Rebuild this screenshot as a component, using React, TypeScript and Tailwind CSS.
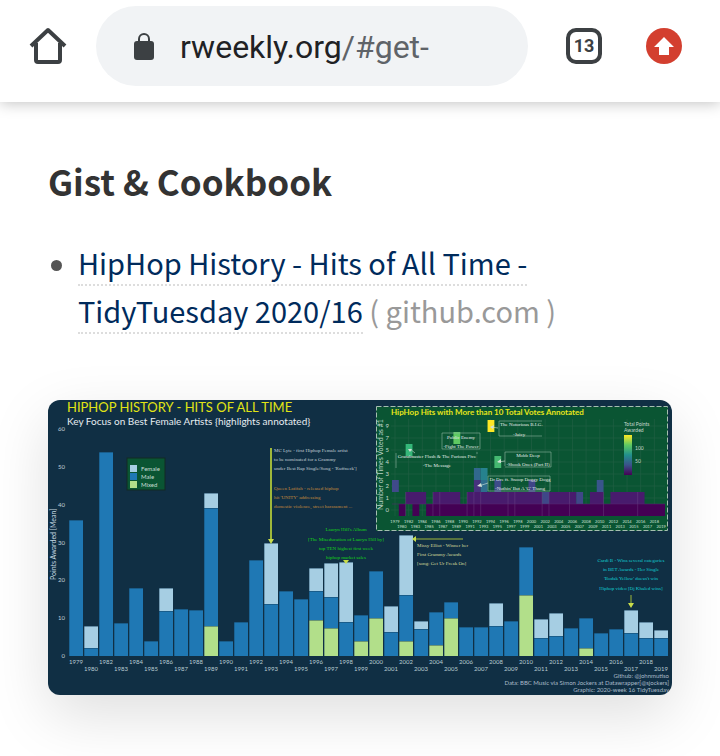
type Segment = "female" | "male" | "mixed";

const fills: Record<Segment, string> = {
  female: "#a6cee3",
  male: "#1f78b4",
  mixed: "#b2df8a",
};

const BASE = 656;

// Year, then the top edge of every stacked segment from the highest down.
const bars: { year: number; stack: [Segment, number][] }[] = [
  { year: 1979, stack: [["male", 520]] },
  { year: 1980, stack: [["female", 626], ["male", 648]] },
  { year: 1982, stack: [["male", 452]] },
  { year: 1983, stack: [["male", 623]] },
  { year: 1984, stack: [["male", 588]] },
  { year: 1985, stack: [["male", 641]] },
  { year: 1986, stack: [["female", 588], ["male", 611]] },
  { year: 1987, stack: [["male", 609]] },
  { year: 1988, stack: [["male", 610]] },
  { year: 1989, stack: [["female", 493], ["male", 508], ["mixed", 626]] },
  { year: 1990, stack: [["male", 641]] },
  { year: 1991, stack: [["male", 622]] },
  { year: 1992, stack: [["male", 560]] },
  { year: 1993, stack: [["female", 543], ["male", 604]] },
  { year: 1994, stack: [["male", 591]] },
  { year: 1995, stack: [["male", 599]] },
  { year: 1996, stack: [["female", 568], ["male", 591], ["mixed", 620]] },
  { year: 1997, stack: [["female", 563], ["male", 597], ["mixed", 628]] },
  { year: 1998, stack: [["female", 562], ["male", 622]] },
  { year: 1999, stack: [["male", 615], ["mixed", 641]] },
  { year: 2000, stack: [["male", 571], ["mixed", 618]] },
  { year: 2001, stack: [["female", 606], ["male", 632]] },
  { year: 2002, stack: [["female", 535], ["male", 595], ["mixed", 641]] },
  { year: 2003, stack: [["female", 621], ["male", 629]] },
  { year: 2004, stack: [["male", 612], ["mixed", 645]] },
  { year: 2005, stack: [["male", 602], ["mixed", 618]] },
  { year: 2006, stack: [["male", 627]] },
  { year: 2007, stack: [["male", 627]] },
  { year: 2008, stack: [["female", 603], ["male", 626]] },
  { year: 2009, stack: [["male", 621]] },
  { year: 2010, stack: [["male", 547], ["mixed", 595]] },
  { year: 2011, stack: [["female", 619], ["male", 638]] },
  { year: 2012, stack: [["female", 613], ["male", 636]] },
  { year: 2013, stack: [["male", 628]] },
  { year: 2014, stack: [["male", 618], ["mixed", 648]] },
  { year: 2015, stack: [["male", 633]] },
  { year: 2016, stack: [["male", 629]] },
  { year: 2017, stack: [["female", 610], ["male", 633]] },
  { year: 2018, stack: [["female", 622], ["male", 638]] },
  { year: 2019, stack: [["female", 630], ["male", 638]] },
];

// Heat map cells: first column, last column, row, colour.
const cells: [number, number, number, string][] = [
  [1, 1, 0, "#440154"],
  [3, 3, 0, "#440154"],
  [5, 39, 0, "#440154"],
  [2, 4, 1, "#481b6d"],
  [6, 9, 1, "#481b6d"],
  [11, 21, 1, "#481b6d"],
  [22, 22, 1, "#3f4788"],
  [23, 26, 1, "#481b6d"],
  [27, 27, 1, "#3f4788"],
  [29, 30, 1, "#481b6d"],
  [32, 36, 1, "#481b6d"],
  [0, 0, 2, "#3f4a8a"],
  [12, 12, 2, "#46327e"],
  [13, 13, 2, "#2e6e8e"],
  [15, 15, 2, "#3e4c8a"],
  [20, 20, 2, "#3f4587"],
  [30, 30, 2, "#39558c"],
  [12, 12, 3, "#31688e"],
  [13, 13, 3, "#26828e"],
  [15, 15, 4, "#45b871"],
  [2, 2, 5, "#35b779"],
  [9, 9, 6, "#5ec962"],
  [14, 14, 7, "#fde725"],
];

const COL = 273 / 40;
const colX = (i: number) => 392 + i * COL;

type Note = {
  x: number;
  y: number;
  text: string;
  fill: string;
  anchor?: "start" | "middle" | "end";
};

const notes: Note[] = [
  { x: 274, y: 452, text: "MC Lyte - first Hiphop Female artist", fill: "#c4d0d8" },
  { x: 274, y: 461, text: "to be nominated for a Grammy", fill: "#c4d0d8" },
  { x: 274, y: 470, text: "under Best Rap Single/Song - 'Ruffneck']", fill: "#c4d0d8" },
  { x: 274, y: 490, text: "Queen Latifah - released hiphop", fill: "#c58a3c" },
  { x: 274, y: 499, text: "hit 'UNITY' addressing", fill: "#c58a3c" },
  { x: 274, y: 508, text: "domestic violence, street harassment ...", fill: "#c58a3c" },
  { x: 346, y: 531, text: "Lauryn Hill's Album", fill: "#16d616", anchor: "middle" },
  { x: 346, y: 541, text: "[The Miseducation of Lauryn Hill by]", fill: "#16d616", anchor: "middle" },
  { x: 346, y: 550, text: "top TEN highest first week", fill: "#16d616", anchor: "middle" },
  { x: 346, y: 559, text: "hiphop market sales", fill: "#16d616", anchor: "middle" },
  { x: 417, y: 547, text: "Missy Elliot - Winner her", fill: "#d8dc9c" },
  { x: 417, y: 556, text: "First Grammy Awards", fill: "#d8dc9c" },
  { x: 417, y: 565, text: "[song: Get Ur Freak On]", fill: "#d8dc9c" },
  { x: 631, y: 562, text: "Cardi B - Wins several categories", fill: "#10cfd6", anchor: "middle" },
  { x: 631, y: 571, text: "in BET Awards - Her Single", fill: "#10cfd6", anchor: "middle" },
  { x: 631, y: 580, text: "'Bodak Yellow' doesn't win", fill: "#10cfd6", anchor: "middle" },
  { x: 631, y: 590, text: "Hiphop video [Dj Khaled wins]", fill: "#10cfd6", anchor: "middle" },
  { x: 500, y: 426, text: "The Notorious B.I.G.", fill: "#e5eee9" },
  { x: 513, y: 436, text: "-Juicy", fill: "#e5eee9" },
  { x: 461, y: 439, text: "Public Enemy", fill: "#e5eee9", anchor: "middle" },
  { x: 461, y: 448, text: "-Fight The Power", fill: "#e5eee9", anchor: "middle" },
  { x: 437, y: 458, text: "Grandmaster Flash & The Furious Five", fill: "#e5eee9", anchor: "middle" },
  { x: 437, y: 467, text: "-The Message", fill: "#e5eee9", anchor: "middle" },
  { x: 528, y: 457, text: "Mobb Deep", fill: "#e5eee9", anchor: "middle" },
  { x: 528, y: 466, text: "-Shook Ones (Part II)", fill: "#e5eee9", anchor: "middle" },
  { x: 520, y: 481, text: "Dr Dre ft. Snoop Doggy Dogg", fill: "#e5eee9", anchor: "middle" },
  { x: 520, y: 490, text: "-Nuthin' But A 'G' Thang", fill: "#e5eee9", anchor: "middle" },
];

const credits: [number, string][] = [
  [678, "Github: @johnmutiso"],
  [685, "Data: BBC Music via Simon Jockers at Datawrapper[@sjockers]"],
  [692, "Graphic: 2020-week 16 TidyTuesday"],
];

function BarChart() {
  return (
    <g>
      {bars.map(({ year, stack }, i) => {
        const x = 69 + i * 15;
        return (
          <g key={year}>
            {stack.map(([kind, top], k) => {
              const bottom = stack[k + 1]?.[1] ?? BASE;
              return (
                <g key={kind}>
                  <rect x={x} y={top} width={14} height={bottom - top} fill={fills[kind]} />
                  <rect x={x} y={top} width={14} height={1} fill="#123c59" fillOpacity={0.45} />
                </g>
              );
            })}
            <rect x={x} y={stack[0][1]} width={1} height={BASE - stack[0][1]} fill="#123c59" fillOpacity={0.35} />
            <text x={x + 7} y={i % 2 ? 671 : 664} fontSize={6} textAnchor="middle" fill="#b9ccd3">
              {year}
            </text>
          </g>
        );
      })}
      {[0, 10, 20, 30, 40, 50, 60].map((v) => (
        <text key={v} x={65} y={658 - v * 3.78} fontSize={6} textAnchor="end" fill="#c0d0d8">
          {v}
        </text>
      ))}
      <text transform="translate(56 580) rotate(-90)" fontSize={7} fill="#c5d8e2">
        Points Awarded [Mean]
      </text>
      <rect x={127} y={458} width={38} height={32} fill="#0a5533" stroke="#122a25" />
      {(["Female", "Male", "Mixed"] as const).map((label, i) => (
        <g key={label}>
          <rect x={130} y={465 + i * 8} width={7} height={7} fill={Object.values(fills)[i]} />
          <text x={141} y={471 + i * 8} fontSize={6} fill="#c8ddd4">
            {label}
          </text>
        </g>
      ))}
    </g>
  );
}

function HeatMap() {
  return (
    <g>
      <rect x={376} y={407} width={292} height={124} fill="#0a5533" />
      <rect x={376.5} y={406.5} width={291} height={124} fill="none" stroke="#a5bfb0" strokeDasharray="5 2" />
      {Array.from({ length: 20 }, (_, i) => (
        <line key={i} x1={colX(i * 2) + 3} x2={colX(i * 2) + 3} y1={419} y2={516} stroke="#215f43" strokeWidth={0.7} />
      ))}
      {Array.from({ length: 8 }, (_, i) => (
        <line key={i} x1={391} x2={665} y1={510 - i * 12} y2={510 - i * 12} stroke="#215f43" strokeWidth={0.7} />
      ))}
      {cells.map(([from, to, row, fill], i) => (
        <rect key={i} x={colX(from)} y={504 - row * 12} width={(to - from + 1) * COL} height={12} fill={fill} />
      ))}
      {[2, 6, 7, 11, 12, 13, 17, 18, 22, 23, 26, 31, 36].map((c) => (
        <line key={c} x1={colX(c)} x2={colX(c)} y1={492} y2={516} stroke="#7b5a91" strokeWidth={0.5} strokeOpacity={0.7} />
      ))}
      <line x1={392} x2={665} y1={504} y2={504} stroke="#5a2b70" strokeWidth={0.5} />
      {[0, 1, 2, 3, 4, 5, 7, 9].map((v, i) => (
        <text key={v} x={389} y={512 - i * 12} fontSize={6} textAnchor="end" fill="#c4d8cd">
          {v}
        </text>
      ))}
      {bars.map(({ year }, i) => (
        <text key={year} x={colX(i) + 3} y={i % 2 ? 528 : 523} fontSize={4} textAnchor="middle" fill="#cfe0d6">
          {year}
        </text>
      ))}
      <text transform="translate(383 510) rotate(-90)" fontSize={7} fill="#b8d2c4">
        Number of Times Voted as #1
      </text>
      <text x={391} y={415} fontSize={8} fontWeight={700} fill="#e6e61a">
        HipHop Hits with More than 10 Total Votes Annotated
      </text>
      <g fill="none" stroke="#8fb5a1" strokeWidth={0.6}>
        <path d="M542 421H499V436H542M442 433H480V449H442V433M396 453V468M477 452V454M505 466V452H551V467H505M488 476H550V491H488V476" />
        <path d="M498 428l-7-1M415 453l-5-4M505 461l-7 1M488 483l-9 3" stroke="#d2e0d7" />
      </g>
      <g fill="#d2e0d7">
        <path d="M490 427l4-2-1 4zM408 449l4 0-2 3zM497 462l4-3v4zM477 486l4-3 1 4z" />
      </g>
      <text x={624} y={426} fontSize={5} fill="#c4d8cd">
        Total Points
      </text>
      <text x={624} y={432} fontSize={5} fill="#c4d8cd">
        Awarded
      </text>
      <rect x={624} y={435} width={8} height={40} fill="url(#viridis)" />
      <text x={635} y={450} fontSize={5} fill="#c4d8cd">
        100
      </text>
      <text x={635} y={463} fontSize={5} fill="#c4d8cd">
        50
      </text>
    </g>
  );
}

function Infographic() {
  return (
    <svg
      viewBox="48 400 624 295"
      role="img"
      aria-label="HipHop History - Hits of All Time"
      className="block h-auto w-full rounded-xl bg-[#102f44] font-['Lato',sans-serif] shadow-[0_20px_60px_rgba(0,0,0,0.13)]"
    >
      <defs>
        <linearGradient id="viridis" x1="0" y1="0" x2="0" y2="1">
          <stop offset="0" stopColor="#fde725" />
          <stop offset="0.25" stopColor="#5ec962" />
          <stop offset="0.5" stopColor="#21918c" />
          <stop offset="0.75" stopColor="#3b528b" />
          <stop offset="1" stopColor="#440154" />
        </linearGradient>
      </defs>
      <text x={67} y={412} fontSize={13} fill="#e0e414">
        HIPHOP HISTORY - HITS OF ALL TIME
      </text>
      <text x={67} y={425} fontSize={10} fill="#e6edf1">
        Key Focus on Best Female Artists {"{"}highlights annotated{"}"}
      </text>
      <BarChart />
      <HeatMap />
      <g fontFamily="'Liberation Serif', serif">
        {notes.map(({ x, y, text, fill, anchor }) => (
          <text key={text} x={x} y={y} fontSize={5} textAnchor={anchor ?? "start"} fill={fill}>
            {text}
          </text>
        ))}
      </g>
      <g stroke="#9fb83a" strokeWidth={2}>
        <path d="M271 448V541" />
        <path d="M463 539H414M631 595V605" strokeWidth={1} />
      </g>
      <path d="M268 539h6l-3 5zM343 560h6l-3 4zM412 539l4-3v6zM628 603h6l-3 5z" fill="#c8dc4a" />
      {credits.map(([y, line]) => (
        <text key={y} x={669} y={y} fontSize={6} textAnchor="end" fill="#a9bac8">
          {line}
        </text>
      ))}
    </svg>
  );
}

function BrowserBar() {
  return (
    <header className="flex h-[102px] items-start bg-white pt-[6px] pr-9 pl-7 font-['Roboto',sans-serif] shadow-[0_1px_14px_rgba(0,0,0,0.25)]">
      <button type="button" aria-label="Home" className="flex h-20 w-10 shrink-0 items-center">
        <svg viewBox="0 0 40 40" className="size-10" fill="none" stroke="#3c4043" strokeWidth="4" strokeLinejoin="round">
          <path d="M3 20L20 4L37 20M8 17V34Q8 36 10 36H30Q32 36 32 34V17" />
        </svg>
      </button>
      <button
        type="button"
        aria-label="Address: rweekly.org/#get-"
        className="ml-7 flex h-20 min-w-0 flex-1 items-center rounded-full bg-[#f1f3f5] pl-[38px] text-[32px] text-[#202124]"
      >
        <svg viewBox="0 0 20 27" className="mr-[26px] h-[27px] w-5 shrink-0">
          <path d="M5 10V6a5 5 0 0 1 10 0v4" fill="none" stroke="#3c4043" strokeWidth="2" />
          <rect y="8" width="20" height="19" rx="3" fill="#3c4043" />
        </svg>
        <span className="pt-0.5">
          rweekly.org<span className="text-[#5f6368]">/#get-</span>
        </span>
      </button>
      <button type="button" aria-label="13 open tabs" className="ml-9 flex h-20 w-10 shrink-0 items-center justify-center">
        <span className="flex size-9 items-center justify-center rounded-[10px] border-4 border-[#3c4043] text-lg font-bold text-[#3c4043]">
          13
        </span>
      </button>
      <button type="button" aria-label="Update available" className="ml-10 flex h-20 w-10 shrink-0 items-center justify-center">
        <svg viewBox="0 0 36 36" className="size-9">
          <circle cx="18" cy="18" r="18" fill="#d33f2f" />
          <path d="M18 9L28 19H23V27H13V19H8Z" fill="#fff" />
        </svg>
      </button>
    </header>
  );
}

export default function App() {
  return (
    <div className="min-h-screen overflow-hidden bg-white">
      <BrowserBar />
      <main className="px-12 pt-[53px] pb-[61px] font-['Noto_Sans_CJK_SC',sans-serif]">
        <h2 className="text-[35px] leading-[52px] font-bold text-[#333]">Gist &amp; Cookbook</h2>
        <ul className="mt-[31px] text-[29px] leading-[48px] text-[#999]">
          <li className="flex">
            <span className="mt-[22px] mr-4 ml-[3px] size-[11px] shrink-0 rounded-full bg-[#555]" />
            <p>
              <a href="https://github.com" className="border-b-2 border-dotted border-[#ddd] pb-px text-[#002b5c]">
                HipHop History - Hits of All Time -<br />
                TidyTuesday 2020/16
              </a>{" "}
              ( github.com )
            </p>
          </li>
        </ul>
        <figure className="mt-[66px]">
          <Infographic />
        </figure>
      </main>
    </div>
  );
}
